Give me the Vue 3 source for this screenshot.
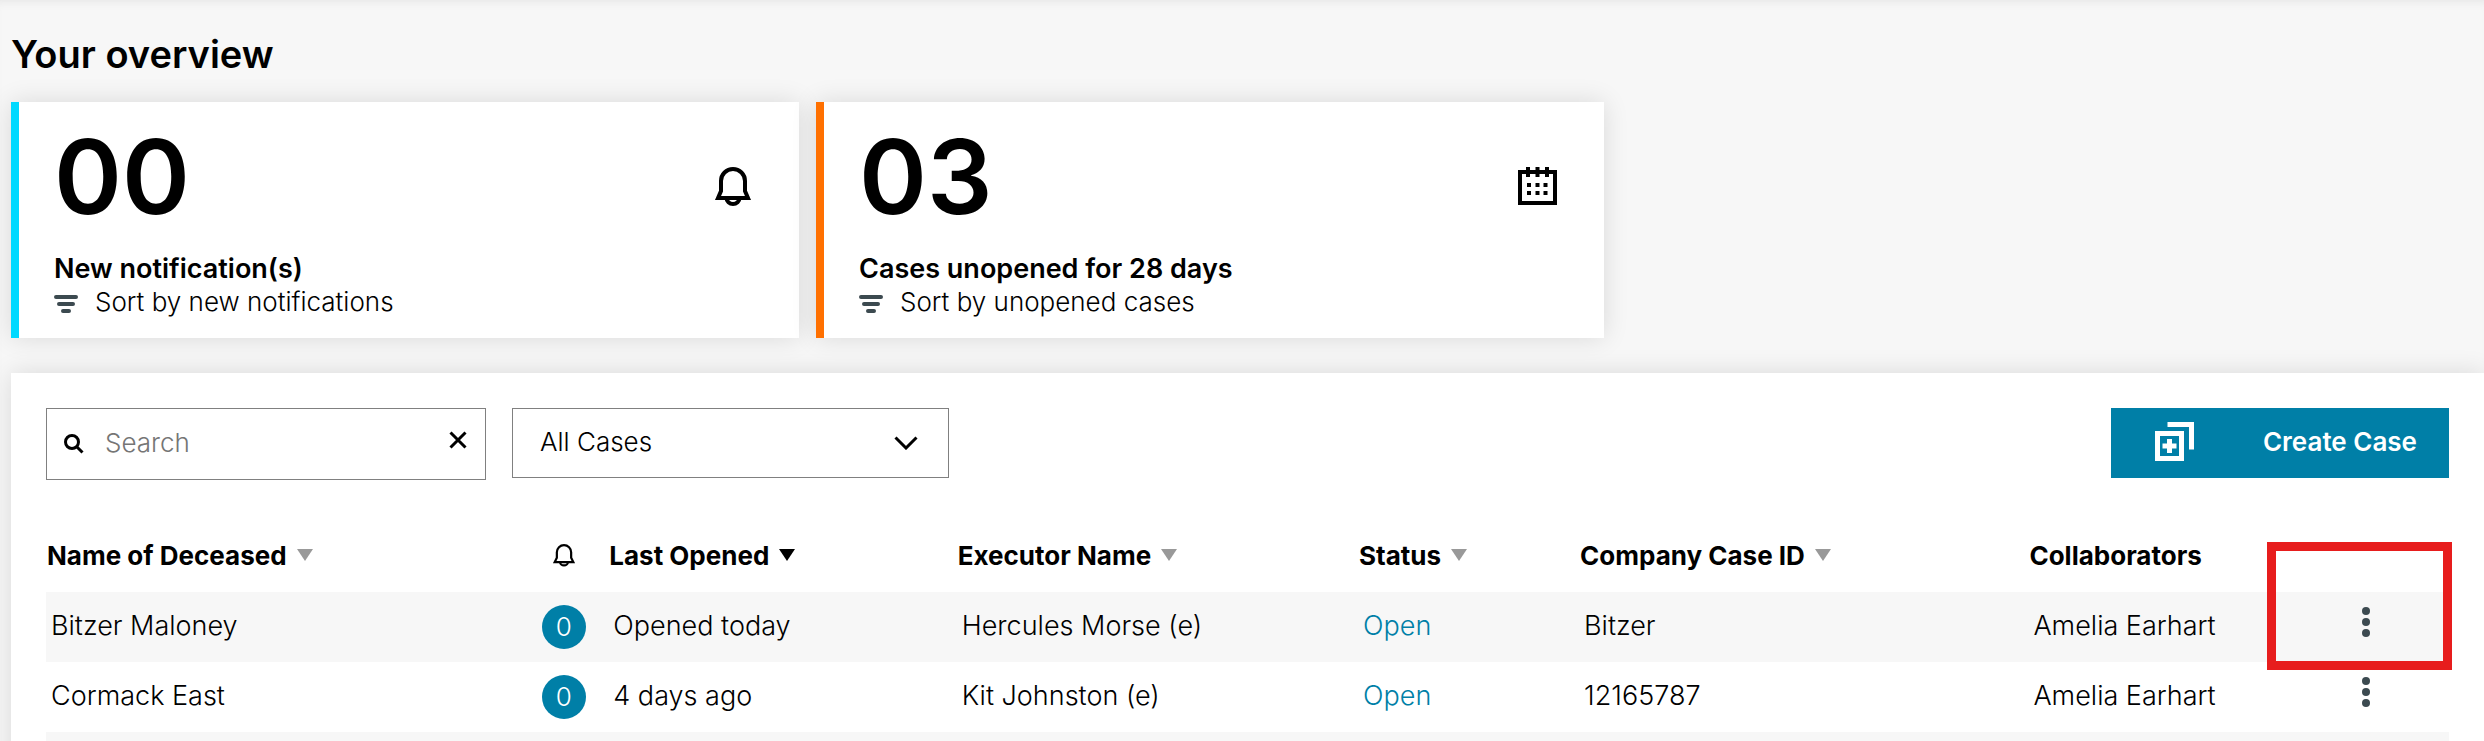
<template>
  <main class="page">
    <h1 class="title">Your overview</h1>

    <section class="cards">
      <article v-for="card in cards" :key="card.label" class="card" :class="card.theme">
        <div class="card-body">
          <p class="count">{{ card.count }}</p>
          <h2 class="card-label">{{ card.label }}</h2>
          <button type="button" class="sort-link">
            <svg class="filter-icon" viewBox="0 0 24 18" aria-hidden="true">
              <path d="M2 2h20M5 9h14M9 16h6" />
            </svg>
            <span>{{ card.sort }}</span>
          </button>
        </div>
        <svg v-if="card.icon === 'bell'" class="card-icon" viewBox="0 0 40 42" aria-hidden="true">
          <path class="line" d="M5 33l3-7V16a12 12 0 0 1 24 0v10l3 7z" />
          <path class="line" d="M13.500 33a6.500 6 0 0 0 13 0" />
        </svg>
        <svg v-else class="card-icon" viewBox="0 0 40 42" aria-hidden="true">
          <path class="line" d="M2 7h35v31H2zM10 2v10M19.500 2v10M29 2v10" />
          <path d="M9 18h4v4H9zM17.500 18h4v4h-4zM25.500 18h4v4h-4zM9 26h4v4H9zM17.500 26h4v4h-4zM25.500 26h4v4h-4z" />
        </svg>
      </article>
    </section>

    <section class="panel">
      <div class="toolbar">
        <div class="search">
          <svg class="search-icon" viewBox="0 0 20 20" aria-hidden="true">
            <circle cx="8" cy="8" r="6.500" />
            <path d="M12.500 12.500l6 6" />
          </svg>
          <input v-model="query" type="text" placeholder="Search" aria-label="Search">
          <button type="button" class="clear" aria-label="Clear search" @click="query = ''">
            <svg viewBox="0 0 18 18" aria-hidden="true">
              <path d="M1.500 1.500l15 15M16.500 1.500l-15 15" />
            </svg>
          </button>
        </div>

        <div class="select">
          <select v-model="filter" aria-label="Filter cases">
            <option>All Cases</option>
          </select>
          <svg class="chevron" viewBox="0 0 24 14" aria-hidden="true">
            <path d="M1.500 1.500L12 12 22.500 1.500" />
          </svg>
        </div>

        <button type="button" class="create">
          <svg viewBox="0 0 39 39" aria-hidden="true">
            <path d="M2.500 11.500h24v25h-24z" />
            <path d="M12.500 2.500h24v25" />
            <path d="M14.500 17v14M7.500 24h14" />
          </svg>
          <span>Create Case</span>
        </button>
      </div>

      <table class="cases">
        <colgroup>
          <col class="col-name">
          <col class="col-bell">
          <col class="col-opened">
          <col class="col-executor">
          <col class="col-status">
          <col class="col-case">
          <col class="col-people">
          <col class="col-menu">
        </colgroup>
        <thead>
          <tr>
            <th v-for="col in columns" :key="col.label" scope="col" :class="{ center: col.bell }">
              <svg v-if="col.bell" class="head-bell" viewBox="0 0 40 42" role="img" aria-label="Notifications">
                <path class="line" d="M3 34l4-8V16a13 13 0 0 1 26 0v10l4 8z" />
                <path class="line" d="M13 34a7 6 0 0 0 14 0" />
              </svg>
              <button v-else-if="col.sortable" type="button" class="sort" :class="{ active: col.active }">
                <span>{{ col.label }}</span>
                <i class="arrow"></i>
              </button>
              <span v-else>{{ col.label }}</span>
            </th>
            <th></th>
          </tr>
        </thead>
        <tbody>
          <tr v-for="(row, i) in rows" :key="row.name">
            <td>{{ row.name }}</td>
            <td class="center"><span class="badge">{{ row.notifications }}</span></td>
            <td>{{ row.opened }}</td>
            <td>{{ row.executor }}</td>
            <td><a href="#" class="status">{{ row.status }}</a></td>
            <td>{{ row.caseId }}</td>
            <td>{{ row.collaborators }}</td>
            <td class="center menu-cell">
              <button type="button" class="menu" aria-label="Case actions">
                <svg viewBox="0 0 8 30" aria-hidden="true">
                  <circle cx="4" cy="4" r="4" />
                  <circle cx="4" cy="15" r="4" />
                  <circle cx="4" cy="26" r="4" />
                </svg>
              </button>
              <span v-if="i === 0" class="highlight"></span>
            </td>
          </tr>
          <tr>
            <td colspan="8"></td>
          </tr>
        </tbody>
      </table>
    </section>
  </main>
</template>

<script setup>
import { ref } from 'vue'

const query = ref('')
const filter = ref('All Cases')

const cards = [
  { count: '00', label: 'New notification(s)', sort: 'Sort by new notifications', icon: 'bell', theme: 'cyan' },
  { count: '03', label: 'Cases unopened for 28 days', sort: 'Sort by unopened cases', icon: 'calendar', theme: 'orange' }
]

const columns = [
  { label: 'Name of Deceased', sortable: true },
  { label: 'Notifications', bell: true },
  { label: 'Last Opened', sortable: true, active: true },
  { label: 'Executor Name', sortable: true },
  { label: 'Status', sortable: true },
  { label: 'Company Case ID', sortable: true },
  { label: 'Collaborators' }
]

const rows = [
  {
    name: 'Bitzer Maloney',
    notifications: 0,
    opened: 'Opened today',
    executor: 'Hercules Morse (e)',
    status: 'Open',
    caseId: 'Bitzer',
    collaborators: 'Amelia Earhart'
  },
  {
    name: 'Cormack East',
    notifications: 0,
    opened: '4 days ago',
    executor: 'Kit Johnston (e)',
    status: 'Open',
    caseId: '12165787',
    collaborators: 'Amelia Earhart'
  }
]
</script>

<style>
body {
  margin: 0;
  background: #f7f7f7;
}
</style>

<style scoped>
* {
  box-sizing: border-box;
}

.page {
  height: 100vh;
  overflow: hidden;
  padding: 30px 0 0 11px;
  background: #f7f7f7;
  box-shadow: inset 0 8px 8px -6px #e6e6e6;
  color: #000;
  font-family: Inter, "Liberation Sans", sans-serif;
  font-size: 26px;
  font-weight: 300;
}

button,
input,
select {
  padding: 0;
  border: 0;
  background: none;
  color: inherit;
  font: inherit;
}

button {
  cursor: pointer;
}

svg {
  display: block;
  flex: none;
}

.title {
  margin: 0 0 24px;
  font-size: 38px;
  font-weight: 600;
  line-height: 48px;
}

.cards {
  display: grid;
  grid-template-columns: repeat(3, 1fr);
  gap: 17px;
  margin-right: 75px;
}

.card {
  display: flex;
  justify-content: space-between;
  padding: 23px 46px 21px 35px;
  border-left: 8px solid;
  background: #fff;
  box-shadow: 0 0 24px rgba(0, 0, 0, 0.12);
}

.cyan {
  border-color: #00d9ff;
}

.orange {
  border-color: #ff7000;
}

.count {
  margin: 0 0 22px;
  font-size: 103px;
  font-weight: 600;
  line-height: 104px;
}

.card-label {
  margin: 0;
  font-size: 27px;
  font-weight: 600;
  line-height: 36px;
}

.sort-link {
  display: flex;
  align-items: center;
  gap: 17px;
  line-height: 30px;
}

.filter-icon {
  width: 24px;
  height: 18px;
  margin-top: 4px;
  fill: none;
  stroke: #3c4a50;
  stroke-width: 4;
  stroke-linecap: round;
}

.card-icon {
  width: 40px;
  height: 42px;
  margin-top: 40px;
}

.line {
  fill: none;
  stroke: #000;
  stroke-width: 4;
}

.panel {
  margin-top: 35px;
  padding: 35px 35px 0;
  background: #fff;
  box-shadow: 0 0 24px rgba(0, 0, 0, 0.12);
}

.toolbar {
  display: flex;
  align-items: flex-start;
  gap: 26px;
  margin-bottom: 38px;
}

.search {
  display: flex;
  align-items: center;
  width: 440px;
  height: 72px;
  padding: 0 18px 4px 17px;
  border: 1px solid #808080;
}

.search-icon {
  width: 20px;
  height: 20px;
  margin-top: 4px;
  fill: none;
  stroke: #000;
  stroke-width: 3;
}

.search input {
  flex: 1;
  min-width: 0;
  padding-left: 21px;
  outline: 0;
}

.search input::placeholder {
  color: #757575;
  opacity: 1;
}

.clear {
  padding-bottom: 4px;
}

.clear svg {
  width: 18px;
  height: 18px;
  fill: none;
  stroke: #000;
  stroke-width: 3;
}

.select {
  display: grid;
  align-items: center;
  width: 437px;
  height: 70px;
  border: 1px solid #808080;
}

.select select,
.chevron {
  grid-area: 1 / 1;
}

.select select {
  width: 100%;
  height: 100%;
  padding: 0 80px 4px 27px;
  appearance: none;
}

.chevron {
  justify-self: end;
  width: 24px;
  height: 14px;
  margin-right: 30px;
  fill: none;
  stroke: #000;
  stroke-width: 3;
  pointer-events: none;
}

.create {
  display: flex;
  align-items: center;
  justify-content: space-between;
  width: 338px;
  height: 70px;
  margin-left: auto;
  padding: 0 32px 4px 44px;
  background: #007fa7;
  color: #fff;
  font-weight: 600;
}

.create svg {
  width: 39px;
  height: 39px;
  fill: none;
  stroke: #fff;
  stroke-width: 5;
}

.cases {
  width: 100%;
  border-collapse: collapse;
  table-layout: fixed;
}

.col-name {
  width: 19.7%;
}

.col-bell {
  width: 3.7%;
}

.col-opened {
  width: 14.5%;
}

.col-executor {
  width: 16.7%;
}

.col-status {
  width: 9.2%;
}

.col-case {
  width: 18.7%;
}

.col-people {
  width: 10.6%;
}

.col-menu {
  width: 6.9%;
}

th {
  height: 74px;
  padding: 0 0 0 1px;
  font-weight: 700;
  text-align: left;
  white-space: nowrap;
}

td {
  height: 70px;
  padding: 0 0 4px 5px;
  font-size: 27px;
  white-space: nowrap;
}

.center {
  padding: 0;
  text-align: center;
}

tbody tr:nth-child(odd) {
  background: #f7f7f7;
}

.sort {
  display: flex;
  align-items: center;
  gap: 10px;
}

.arrow {
  border: 8px solid transparent;
  border-top: 12px solid #999;
  border-bottom: 0;
}

.active .arrow {
  border-top-color: #000;
}

.head-bell {
  width: 22px;
  height: 24px;
  margin: 0 auto;
}

.badge {
  display: inline-flex;
  align-items: center;
  justify-content: center;
  width: 44px;
  height: 44px;
  padding-bottom: 2px;
  border-radius: 50%;
  background: #007fa7;
  color: #fff;
  font-size: 26px;
  vertical-align: middle;
}

.status {
  color: #007fa7;
  text-decoration: none;
}

.menu-cell {
  position: relative;
}

.menu {
  padding: 0 12px 10px;
  vertical-align: middle;
}

.menu svg {
  width: 8px;
  height: 30px;
  fill: #3c4a50;
}

/* Callout drawn over the first row's action menu */
.highlight {
  position: absolute;
  top: -50px;
  right: -3px;
  bottom: -8px;
  left: -16px;
  border: 9px solid #e71d1d;
  pointer-events: none;
}
</style>
